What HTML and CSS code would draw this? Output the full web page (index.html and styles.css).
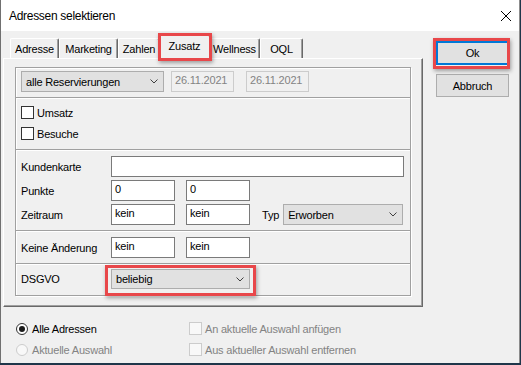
FILE: index.html
```html
<!DOCTYPE html>
<html lang="de">
<head>
  <meta charset="UTF-8">
  <meta name="viewport" content="width=device-width, initial-scale=1.0">
  <title>Adressen selektieren</title>
  <link rel="stylesheet" href="styles.css">
</head>
<body>

  <div class="window">
    <div class="titlebar">
      <span class="title">Adressen selektieren</span>
      <svg class="close" width="10" height="10" viewBox="0 0 10 10">
        <path d="M0 0L10 10M10 0L0 10" stroke="#000" stroke-width="1" fill="none"/>
      </svg>
    </div>

    <div class="main">
      <div class="tabarea">
        <div class="tabs">
          <div class="tab tab-adresse">Adresse</div>
          <div class="tab tab-marketing">Marketing</div>
          <div class="tab tab-zahlen">Zahlen</div>
          <div class="tab tab-zusatz active marked">Zusatz</div>
          <div class="tab tab-wellness">Wellness</div>
          <div class="tab tab-oql">OQL</div>
        </div>

        <div class="panel">
          <div class="group">
            <div class="section sec-period">
              <div class="combo combo-period">
                <span>alle Reservierungen</span>
                <svg class="chevron" width="8" height="5" viewBox="0 0 8 5"><path d="M0.5 0.5L4 4L7.5 0.5" stroke="#404040" fill="none"/></svg>
              </div>
              <div class="field disabled date">26.11.2021</div>
              <div class="field disabled date date-to">26.11.2021</div>
            </div>

            <div class="section sec-checks">
              <label class="check"><span class="box"></span>Umsatz</label>
              <label class="check"><span class="box"></span>Besuche</label>
            </div>

            <div class="section sec-card">
              <div class="row">
                <span class="label">Kundenkarte</span>
                <div class="field wide"></div>
              </div>
              <div class="row">
                <span class="label">Punkte</span>
                <div class="field small">0</div>
                <div class="field small second">0</div>
              </div>
              <div class="row">
                <span class="label">Zeitraum</span>
                <div class="field small">kein</div>
                <div class="field small second">kein</div>
                <span class="typ">Typ</span>
                <div class="combo combo-typ">
                  <span>Erworben</span>
                  <svg class="chevron" width="8" height="5" viewBox="0 0 8 5"><path d="M0.5 0.5L4 4L7.5 0.5" stroke="#404040" fill="none"/></svg>
                </div>
              </div>
            </div>

            <div class="section sec-change">
              <div class="row">
                <span class="label">Keine Änderung</span>
                <div class="field small">kein</div>
                <div class="field small second">kein</div>
              </div>
            </div>

            <div class="section sec-dsgvo">
              <div class="row">
                <span class="label">DSGVO</span>
                <div class="combo combo-dsgvo marked">
                  <span>beliebig</span>
                  <svg class="chevron" width="8" height="5" viewBox="0 0 8 5"><path d="M0.5 0.5L4 4L7.5 0.5" stroke="#404040" fill="none"/></svg>
                </div>
              </div>
            </div>
          </div>
        </div>
      </div>

      <div class="buttons">
        <button class="btn btn-default marked">Ok</button>
        <button class="btn">Abbruch</button>
      </div>
    </div>

    <div class="options">
      <label class="opt"><span class="radio on"></span>Alle Adressen</label>
      <label class="opt disabled"><span class="box"></span>An aktuelle Auswahl anfügen</label>
      <label class="opt disabled"><span class="radio"></span>Aktuelle Auswahl</label>
      <label class="opt disabled"><span class="box"></span>Aus aktueller Auswahl entfernen</label>
    </div>
  </div>

</body>
</html>
```

FILE: styles.css
```css
html {
  background: #1f364a;
}
body {
  margin: 0;
  font-family: "Liberation Sans", Arial, sans-serif;
  font-size: 11px;
  letter-spacing: -0.2px;
  color: #000;
}

.window {
  width: 518px;
  height: 363px;
  background: #f0f0f0;
  border-left: 1px solid #707070;
  border-right: 1px solid #8c8c8c;
  display: flex;
  flex-direction: column;
}

/* title bar */
.titlebar {
  height: 31px;
  background: #fff;
  display: flex;
  align-items: center;
  justify-content: space-between;
  padding: 0 8px;
}
.title {
  font-size: 12px;
  letter-spacing: -0.3px;
}

.main {
  display: flex;
  align-items: flex-start;
}
.tabarea {
  margin-left: 2px;
  width: 420px;
}

/* tabs */
.tabs {
  display: flex;
  align-items: flex-end;
  height: 27px;
  padding-left: 7px;
}
.tab {
  box-sizing: border-box;
  height: 20px;
  padding-top: 1px;
  line-height: 18px;
  text-align: center;
  white-space: nowrap;
  background: #f0f0f0;
  border: 1px solid #fff;
  border-bottom: none;
  border-right-color: #696969;
  border-radius: 2px 2px 0 0;
  box-shadow: inset -1px 0 0 #a0a0a0;
}
.tab-adresse { width: 49px; }
.tab-marketing { width: 59px; }
.tab-zahlen { width: 42px; overflow: hidden; }
.tab-zusatz { width: 49px; }
.tab-wellness { width: 51px; }
.tab-oql { width: 43px; }
.tab.active {
  position: relative;
  z-index: 2;
  width: 53px;
  height: 24px;
  margin: 0 -2px -1px;
}

/* tab page */
.panel {
  border: 1px solid #fff;
  border-right-color: #696969;
  border-bottom-color: #696969;
  box-shadow: inset -1px -1px 0 #a0a0a0;
  padding: 8px 11px 10px;
}
.group {
  border: 1px solid #a0a0a0;
  box-shadow: 1px 1px 0 #fff, inset 1px 1px 0 #fff;
}
.section {
  display: flex;
  align-items: center;
  padding: 0 5px;
}
.section + .section {
  border-top: 1px solid #a0a0a0;
  box-shadow: inset 0 1px 0 #fff;
}
.sec-period { padding-top: 3px; padding-bottom: 5px; }
.sec-checks {
  flex-direction: column;
  align-items: flex-start;
  padding-top: 4px;
  padding-bottom: 5px;
}
.sec-card {
  flex-direction: column;
  align-items: stretch;
  gap: 3px;
  padding-top: 6px;
  padding-bottom: 5px;
}
.sec-change { padding-top: 6px; padding-bottom: 5px; }
.sec-dsgvo { padding-top: 5px; padding-bottom: 6px; }

.row {
  display: flex;
  align-items: center;
}
.label {
  width: 90px;
  flex-shrink: 0;
}

/* controls */
.field {
  box-sizing: border-box;
  height: 21px;
  border: 1px solid #7a7a7a;
  background: #fff;
  padding-left: 3px;
  line-height: 17px;
}
.field.wide { width: 293px; }
.field.small { width: 64px; }
.field.second { margin-left: 11px; }
.field.disabled {
  border-color: #cccccc;
  background: #f0f0f0;
  color: #838383;
}
.date {
  width: 63px;
  margin-left: 7px;
}
.date-to { margin-left: 12px; }

.combo {
  box-sizing: border-box;
  height: 21px;
  border: 1px solid #adadad;
  background: #e1e1e1;
  display: flex;
  align-items: center;
  justify-content: space-between;
  padding: 0 5px 0 4px;
}
.combo-period { width: 143px; }
.combo-typ { width: 120px; }
.combo-dsgvo { width: 139px; height: 20px; }
.typ { margin: 0 4px 0 12px; }

.check {
  display: flex;
  align-items: center;
  gap: 3px;
  height: 21px;
}
.box {
  box-sizing: border-box;
  width: 13px;
  height: 13px;
  border: 1px solid #333;
  background: #fff;
}

/* buttons */
.buttons {
  margin: 10px 0 0 13px;
  display: flex;
  flex-direction: column;
  gap: 9px;
}
.btn {
  box-sizing: border-box;
  width: 73px;
  height: 23px;
  padding: 0;
  border: 1px solid #adadad;
  background: #e1e1e1;
  font: inherit;
  letter-spacing: inherit;
  color: #000;
}
.btn-default {
  height: 24px;
  border: 2px solid #0078d7;
}

/* bottom options */
.options {
  display: grid;
  grid-template-columns: 173px auto;
  grid-auto-rows: 21px;
  padding: 11px 0 0 15px;
}
.opt {
  display: flex;
  align-items: center;
  gap: 4px;
}
.opt .box { margin-right: -1px; }
.radio {
  box-sizing: border-box;
  width: 12px;
  height: 12px;
  border: 1px solid #333;
  border-radius: 50%;
  background: #fff;
  display: flex;
  align-items: center;
  justify-content: center;
}
.radio.on::after {
  content: "";
  width: 6px;
  height: 6px;
  border-radius: 50%;
  background: #1a1a1a;
}
.opt.disabled { color: #838383; }
.opt.disabled .box,
.opt.disabled .radio {
  border-color: #cccccc;
  background: #f8f8f8;
}

/* red annotation frames */
.marked { position: relative; }
.marked::after {
  content: "";
  position: absolute;
  border: 3px solid #e8474a;
  box-shadow: 1px 2px 4px rgba(0, 0, 0, 0.35);
  pointer-events: none;
}
.tab.marked::after { inset: -3px -2px -2px -1px; }
.btn.marked::after { inset: -5px -3px -6px -5px; }
.combo.marked::after { inset: -5px -7px -8px -7px; }
```
